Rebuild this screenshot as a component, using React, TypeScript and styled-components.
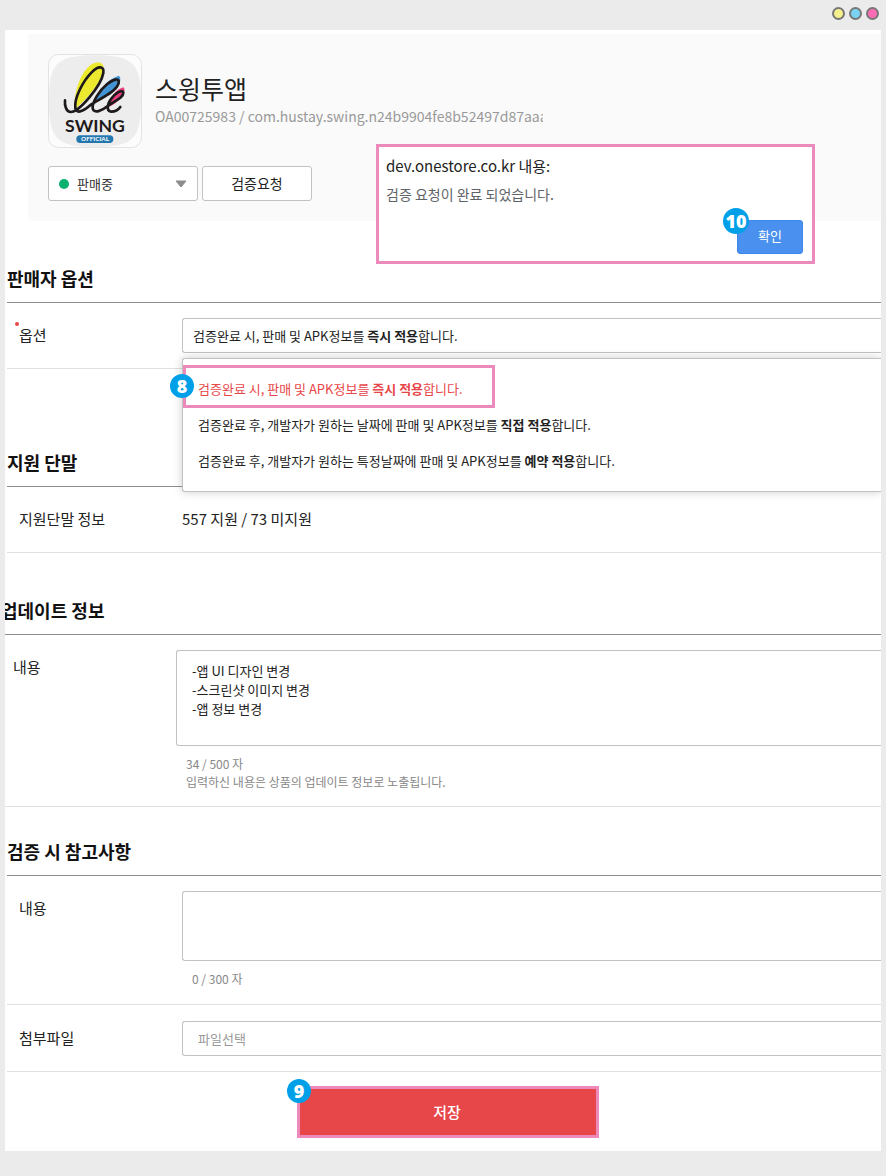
import React from 'react';
import styled, { createGlobalStyle } from 'styled-components';

const GlobalStyle = createGlobalStyle`
  *, *::before, *::after { box-sizing: border-box; }
  body {
    margin: 0;
    background: #ebebeb;
    color: #222;
    font-family: "Noto Sans CJK KR", "Noto Sans", sans-serif;
    font-size: 13px;
  }
  button, input, select, textarea { font: inherit; color: inherit; }
  h1, h2, p, ul { margin: 0; padding: 0; }
`;

const PINK = '#ec8abb';
const LINE = '#c2c2c2';

const Page = styled.div`
  display: flex;
  flex-direction: column;
  padding: 0 5px 25px;
`;

const WindowBar = styled.header`
  display: flex;
  justify-content: flex-end;
  gap: 4px;
  height: 30px;
  padding: 7px 2px 0 0;
`;

const WindowDot = styled.span<{ $color: string }>`
  width: 13px;
  height: 13px;
  border: 2px solid #777;
  border-radius: 50%;
  background: ${(p) => p.$color};
`;

const Panel = styled.main`
  position: relative;
  overflow: hidden;
  padding-top: 4px;
  background: #fff;
`;

const AppCard = styled.section`
  display: flex;
  flex-direction: column;
  gap: 18px;
  margin-left: 23px;
  padding: 20px;
  border-radius: 4px 0 0 4px;
  background: #fafafa;
`;

const AppInfo = styled.div`
  display: flex;
  align-items: center;
  gap: 13px;
`;

const AppTexts = styled.div`
  min-width: 0;
  padding-bottom: 4px;
`;

const AppIcon = styled.svg`
  flex: none;
  width: 94px;
  height: 94px;
`;

const AppName = styled.h1`
  font-size: 25px;
  font-weight: 400;
  line-height: 34px;
`;

const AppId = styled.p`
  max-width: 388px;
  overflow: hidden;
  white-space: nowrap;
  color: #999;
  font-size: 14px;
  line-height: 22px;
`;

const AppActions = styled.div`
  display: flex;
  gap: 4px;
`;

const StatusField = styled.div`
  position: relative;
  width: 150px;
`;

const StatusSelect = styled.select`
  display: block;
  width: 100%;
  height: 35px;
  padding: 0 28px;
  border: 1px solid ${LINE};
  border-radius: 3px;
  background: #fff;
  color: #333;
  appearance: none;
`;

const StatusDot = styled.span`
  position: absolute;
  top: 13px;
  left: 11px;
  width: 10px;
  height: 10px;
  border-radius: 50%;
  background: #0bb170;
`;

const Caret = styled.svg`
  position: absolute;
  top: 14px;
  right: 11px;
  width: 12px;
  height: 8px;
  pointer-events: none;
`;

const RequestButton = styled.button`
  width: 110px;
  height: 35px;
  padding: 0 0 2px;
  border: 1px solid ${LINE};
  border-radius: 3px;
  background: #fff;
  font-size: 14px;
`;

const AlertDialog = styled.section`
  position: absolute;
  top: 114px;
  left: 371px;
  display: flex;
  flex-direction: column;
  width: 439px;
  height: 120px;
  padding: 7px 9px 7px 7px;
  border: 3px solid ${PINK};
  background: #fff;
`;

const AlertTitle = styled.h2`
  color: #222;
  font-size: 15px;
  font-weight: 400;
  line-height: 24px;
`;

const AlertText = styled.p`
  margin-top: 4px;
  color: #5f6368;
  font-size: 14px;
  line-height: 24px;
`;

const AlertActions = styled.div`
  position: relative;
  align-self: flex-end;
  margin-top: auto;
`;

const ConfirmButton = styled.button`
  display: block;
  width: 66px;
  height: 34px;
  padding: 0 0 3px;
  border: 1px solid #3f87ea;
  border-radius: 3px;
  background: #4a90ee;
  color: #fff;
`;

const StepBadge = styled.span<{ $top: number; $left: number; $size?: number }>`
  position: absolute;
  z-index: 1;
  top: ${(p) => p.$top}px;
  left: ${(p) => p.$left}px;
  display: flex;
  align-items: center;
  justify-content: center;
  width: ${(p) => p.$size ?? 24}px;
  height: ${(p) => p.$size ?? 24}px;
  border-radius: 50%;
  background: #00a0e9;
  color: #fff;
  font-family: "Noto Sans", sans-serif;
  font-size: 18px;
  font-weight: 900;
  line-height: 24px;
`;

const Form = styled.form`
  padding: 0 0 13px 2px;
`;

const Section = styled.section<{ $gap: number; $outdent?: boolean }>`
  margin-top: ${(p) => p.$gap}px;
  margin-left: ${(p) => (p.$outdent ? -6 : 0)}px;
`;

const SectionTitle = styled.h2`
  height: 47px;
  border-bottom: 1px solid #8c8c8c;
  color: #111;
  font-size: 18px;
  font-weight: 700;
  line-height: 44px;
`;

const Row = styled.div<{ $roomy?: boolean }>`
  display: grid;
  grid-template-columns: 163px minmax(0, 1fr);
  padding: 15px 0 ${(p) => (p.$roomy ? 16 : 15)}px 12px;
  border-bottom: 1px solid #e0e0e0;

  & + & {
    padding-top: 16px;
  }
`;

const RowLabel = styled.label`
  position: relative;
  height: 35px;
  font-size: 15px;
  line-height: 34px;
`;

const RequiredMark = styled.span`
  position: absolute;
  top: 4px;
  left: -4px;
  width: 4px;
  height: 4px;
  border-radius: 50%;
  background: #e8474a;
`;

const RowText = styled.p`
  font-size: 15px;
  line-height: 34px;
`;

const Field = styled.div`
  position: relative;
`;

const Combo = styled.button`
  display: block;
  width: 100%;
  height: 35px;
  padding: 0 10px;
  border: 1px solid ${LINE};
  border-right: 0;
  border-radius: 3px 0 0 3px;
  background: #fff;
  text-align: left;
`;

const OptionList = styled.ul`
  position: absolute;
  z-index: 1;
  top: 40px;
  left: 0;
  right: 0;
  padding: 12px 0;
  border: 1px solid ${LINE};
  border-right: 0;
  border-radius: 3px 0 0 3px;
  background: #fff;
  box-shadow: 0 0 10px rgba(0, 0, 0, 0.2);
  list-style: none;
`;

const Option = styled.li<{ $selected?: boolean }>`
  position: relative;
  padding-left: 15px;
  color: ${(p) => (p.$selected ? '#e8474a' : '#222')};
  line-height: 36px;
`;

const Highlight = styled.span`
  position: absolute;
  top: -6px;
  left: 0;
  width: 312px;
  height: 43px;
  border: 3px solid ${PINK};
`;

const TextArea = styled.textarea<{ $height: number }>`
  display: block;
  width: 100%;
  height: ${(p) => p.$height}px;
  padding: 10px 15px;
  border: 1px solid ${LINE};
  border-right: 0;
  border-radius: 3px 0 0 3px;
  background: #fff;
  line-height: 19px;
  resize: none;
`;

const Hint = styled.div`
  padding: 9px 10px 0;
  color: #888;
  font-size: 12px;
  line-height: 18px;
`;

const FileInput = styled.input`
  display: block;
  width: 100%;
  height: 35px;
  padding: 0 15px;
  border: 1px solid ${LINE};
  border-right: 0;
  border-radius: 3px 0 0 3px;
  background: #fff;
  &::placeholder { color: #999; opacity: 1; }
`;

const FormActions = styled.div`
  display: flex;
  justify-content: center;
  padding: 14px 0 0 8px;
`;

const SaveWrap = styled.div`
  position: relative;
`;

const SaveButton = styled.button`
  display: block;
  width: 302px;
  height: 52px;
  padding: 0 2px 2px 0;
  border: 3px solid ${PINK};
  background: #e8474a;
  color: #fff;
  font-size: 15px;
  font-weight: 500;
`;

const SwingLogo = () => (
  <AppIcon viewBox="24 27 282 282" role="img" aria-label="SWING OFFICIAL">
    <rect x="25.5" y="28.5" width="279" height="279" rx="30" fill="#fcfcfc" stroke="#e2e2e2" strokeWidth="3" />
    <path
      d="M27 168C27 60 45 31 165 31S303 60 303 168 285 306 165 306 27 276 27 168Z"
      fill="#ededed"
    />
    <path d="M105 191C99 142 124 74 158 56C176 48 196 52 190 78C183 112 140 165 105 191Z" fill="#ece92f" />
    <path d="M167 166C176 138 202 102 236 92C246 98 240 118 228 133C212 150 190 160 167 166Z" fill="#4394d4" />
    <path d="M206 186C208 156 230 132 250 127C258 134 252 148 242 160C232 172 218 182 206 186Z" fill="#ee3e80" />
    <path
      d="M75 166C73 184 80 201 92 201C118 201 183 123 190 84C194 62 174 62 157 80C129 108 102 158 106 190C110 210 134 196 154 178C182 160 232 138 236 113C239 98 220 102 201 118C179 136 156 170 158 190C161 208 188 196 202 184C222 168 250 160 250 143C248 130 222 148 213 162C200 180 200 200 214 200C226 200 236 193 241 186"
      fill="none"
      stroke="#1e1a1b"
      strokeWidth="8"
      strokeLinecap="round"
      strokeLinejoin="round"
    />
    <text x="165" y="261" textAnchor="middle" fontFamily="Lato, sans-serif" fontWeight="700" fontSize="53" fill="#1e1a1b">
      SWING
    </text>
    <rect x="109" y="271" width="111" height="23" rx="11" fill="#2577b0" />
    <text x="165" y="289" textAnchor="middle" fontFamily="Lato, sans-serif" fontWeight="700" fontSize="19" fill="#fff">
      OFFICIAL
    </text>
  </AppIcon>
);

const UPDATE_TEXT = '-앱 UI 디자인 변경\n-스크린샷 이미지 변경\n-앱 정보 변경';

export default function App() {
  return (
    <>
      <GlobalStyle />
      <Page>
        <WindowBar>
          <WindowDot $color="#f6f08c" />
          <WindowDot $color="#7ad3f3" />
          <WindowDot $color="#fb6cb4" />
        </WindowBar>
        <Panel>
          <AppCard>
            <AppInfo>
              <SwingLogo />
              <AppTexts>
                <AppName>스윙투앱</AppName>
                <AppId>OA00725983 / com.hustay.swing.n24b9904fe8b52497d87aaa</AppId>
              </AppTexts>
            </AppInfo>
            <AppActions>
              <StatusField>
                <StatusSelect aria-label="판매 상태" defaultValue="on">
                  <option value="on">판매중</option>
                </StatusSelect>
                <StatusDot />
                <Caret viewBox="0 0 12 8" aria-hidden="true">
                  <path d="M1 1H11L6 7Z" fill="#8c8c8c" stroke="#8c8c8c" strokeLinejoin="round" />
                </Caret>
              </StatusField>
              <RequestButton type="button">검증요청</RequestButton>
            </AppActions>
          </AppCard>

          <AlertDialog role="alertdialog" aria-labelledby="alert-title">
            <AlertTitle id="alert-title">dev.onestore.co.kr 내용:</AlertTitle>
            <AlertText>검증 요청이 완료 되었습니다.</AlertText>
            <AlertActions>
              <StepBadge $top={-12} $left={-14} $size={26}>10</StepBadge>
              <ConfirmButton type="button">확인</ConfirmButton>
            </AlertActions>
          </AlertDialog>

          <Form onSubmit={(e) => e.preventDefault()}>
            <Section $gap={35}>
              <SectionTitle>판매자 옵션</SectionTitle>
              <Row>
                <RowLabel htmlFor="option">
                  <RequiredMark />
                  옵션
                </RowLabel>
                <Field>
                  <Combo id="option" type="button" aria-haspopup="listbox" aria-expanded="true">
                    검증완료 시, 판매 및 APK정보를 <b>즉시 적용</b>합니다.
                  </Combo>
                  <OptionList role="listbox">
                    <Option role="option" aria-selected="true" $selected>
                      검증완료 시, 판매 및 APK정보를 <b>즉시 적용</b>합니다.
                      <Highlight />
                      <StepBadge $top={3} $left={-13}>8</StepBadge>
                    </Option>
                    <Option role="option" aria-selected="false">
                      검증완료 후, 개발자가 원하는 날짜에 판매 및 APK정보를 <b>직접 적용</b>합니다.
                    </Option>
                    <Option role="option" aria-selected="false">
                      검증완료 후, 개발자가 원하는 특정날짜에 판매 및 APK정보를 <b>예약 적용</b>합니다.
                    </Option>
                  </OptionList>
                </Field>
              </Row>
            </Section>

            <Section $gap={71}>
              <SectionTitle>지원 단말</SectionTitle>
              <Row>
                <RowLabel as="span">지원단말 정보</RowLabel>
                <RowText>557 지원 / 73 미지원</RowText>
              </Row>
            </Section>

            <Section $gap={35} $outdent>
              <SectionTitle>업데이트 정보</SectionTitle>
              <Row>
                <RowLabel htmlFor="update">내용</RowLabel>
                <Field>
                  <TextArea id="update" $height={96} defaultValue={UPDATE_TEXT} />
                  <Hint>
                    <p>34 / 500 자</p>
                    <p>입력하신 내용은 상품의 업데이트 정보로 노출됩니다.</p>
                  </Hint>
                </Field>
              </Row>
            </Section>

            <Section $gap={22}>
              <SectionTitle>검증 시 참고사항</SectionTitle>
              <Row $roomy>
                <RowLabel htmlFor="note">내용</RowLabel>
                <Field>
                  <TextArea id="note" $height={70} />
                  <Hint>
                    <p>0 / 300 자</p>
                  </Hint>
                </Field>
              </Row>
              <Row>
                <RowLabel htmlFor="file">첨부파일</RowLabel>
                <FileInput id="file" type="text" placeholder="파일선택" readOnly />
              </Row>
            </Section>

            <FormActions>
              <SaveWrap>
                <StepBadge $top={-7} $left={-10}>9</StepBadge>
                <SaveButton type="submit">저장</SaveButton>
              </SaveWrap>
            </FormActions>
          </Form>
        </Panel>
      </Page>
    </>
  );
}
